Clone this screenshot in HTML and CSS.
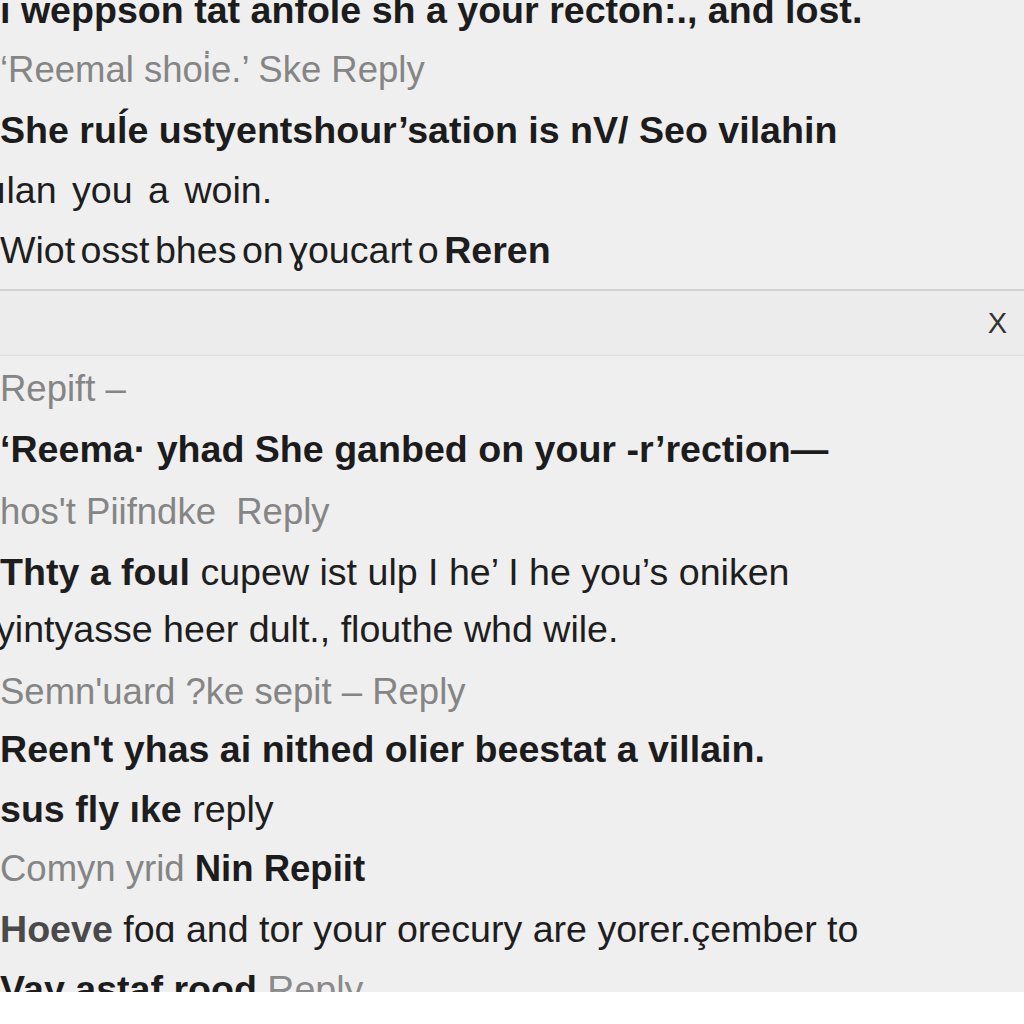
FILE: index.html
```
<!DOCTYPE html>
<html>
<head>
<meta charset="utf-8">
<link rel="stylesheet" href="styles.css">
</head>
<body>
<div class="screen">
  <section class="thread top">
    <p class="line b first">ı wepрson tat anfole sh a your recton:., and lost.</p>
    <p class="line g">‘Reemal shoi̇e.’ Ske Reply</p>
    <p class="line b">She ruĺe ustyentshour’sation is nV/ Seo vilahin</p>
    <p class="line r cut wide">ılan you a woin.</p>
    <p class="line r tight">Wiot ᴏsst bhes on ɣoucart o <strong>Reren</strong></p>
  </section>
  <header class="bar">
    <span class="close">X</span>
  </header>
  <section class="thread bottom">
    <p class="line g">Repift –</p>
    <p class="line b">‘Reema· yhad She ganbed on your -r’rection—</p>
    <p class="line g down">hos't Piifndke&nbsp; Reply</p>
    <p class="line r down"><strong>Thty a foul</strong> cupew ist ulp I he’ I he you’s oniken</p>
    <p class="line r cut">yintyasse heer dult., flouthe whd wile.</p>
    <p class="line g down">Semn'uard ?ke sepit – Reply</p>
    <p class="line b">Reen't yhas ai nithed olier beestat a villain.</p>
    <p class="line r"><strong>sus fly ıke</strong> reply</p>
    <p class="line g"><span>Comyn yrid</span> <strong class="dk">Nin Repiit</strong></p>
    <p class="line r"><strong class="mid">Hoeve</strong> foɑ and tor your orecury are yorer.çember to</p>
    <p class="line b">Vay astaf rood <span class="gr">Reply</span></p>
  </section>
</div>
</body>
</html>
```
FILE: styles.css
```
html, body {
  margin: 0;
  padding: 0;
  background: #ffffff;
}
.screen {
  height: 992px;
  overflow: hidden;
  background: #efefef;
  font-family: "Liberation Sans", Arial, sans-serif;
  font-size: 37.6px;
  color: #1e1e1e;
}
.thread {
  display: flex;
  flex-direction: column;
}
.line {
  margin: 0;
  height: 60px;
  line-height: 60px;
  white-space: nowrap;
}
.line.first {
  margin-top: -20px;
}
.b {
  font-weight: bold;
  color: #1c1c1c;
}
.r {
  font-weight: normal;
  color: #1e1e1e;
}
.g {
  color: #858585;
  font-size: 36.5px;
}
.g .dk {
  color: #1c1c1c;
}
.gr {
  color: #8a8a8a;
  font-weight: normal;
}
.mid {
  color: #4a4a4a;
}
.cut {
  margin-left: -4px;
}
.wide {
  word-spacing: 5px;
}
.tight {
  word-spacing: -5px;
}
.down {
  position: relative;
  top: 3px;
}
.top {
  padding-bottom: 9px;
  border-bottom: 2px solid #d2d2d2;
}
.bar {
  height: 64px;
  background: #ececec;
  border-bottom: 1px solid #dedede;
  display: flex;
  align-items: center;
  justify-content: flex-end;
  padding-right: 17px;
}
.close {
  font-size: 29px;
  color: #333333;
  line-height: 1;
}
.bottom {
  padding-top: 3px;
}
```
